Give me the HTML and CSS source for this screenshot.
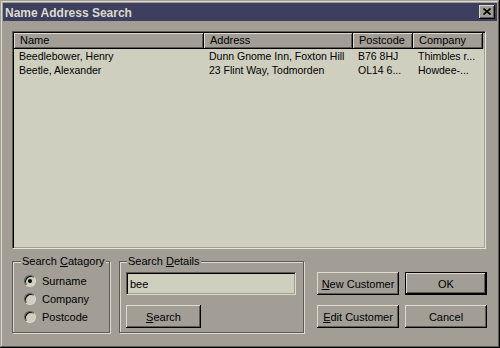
FILE: index.html
```html
<!DOCTYPE html>
<html>
<head>
<meta charset="utf-8">
<link rel="stylesheet" href="styles.css">
</head>
<body>
<div class="window">
  <div class="titlebar">
    <span class="title">Name Address Search</span>
    <div class="close"><svg width="8" height="7" viewBox="0 0 8 7"><path d="M0.5 0.5 L7.5 6.5 M7.5 0.5 L0.5 6.5" stroke="#000" stroke-width="1.6" fill="none"/></svg></div>
  </div>
  <div class="content">
    <div class="list">
      <div class="header">
        <div class="hcell c1">Name</div>
        <div class="hcell c2">Address</div>
        <div class="hcell c3">Postcode</div>
        <div class="hcell c4">Company</div>
      </div>
      <div class="row">
        <div class="cell c1">Beedlebower, Henry</div>
        <div class="cell c2">Dunn Gnome Inn, Foxton Hill</div>
        <div class="cell c3">B76 8HJ</div>
        <div class="cell c4">Thimbles r...</div>
      </div>
      <div class="row">
        <div class="cell c1">Beetle, Alexander</div>
        <div class="cell c2">23 Flint Way, Todmorden</div>
        <div class="cell c3">OL14 6...</div>
        <div class="cell c4">Howdee-...</div>
      </div>
    </div>
    <div class="bottom">
      <fieldset class="group cat">
        <legend>Search <u>C</u>atagory</legend>
        <div class="radio-row"><span class="radio checked"></span><span>Surname</span></div>
        <div class="radio-row"><span class="radio"></span><span>Company</span></div>
        <div class="radio-row"><span class="radio"></span><span>Postcode</span></div>
      </fieldset>
      <fieldset class="group det">
        <legend>Search <u>D</u>etails</legend>
        <div class="input">bee</div>
        <div class="btn search"><u>S</u>earch</div>
      </fieldset>
      <div class="buttons">
        <div class="btn"><u>N</u>ew Customer</div>
        <div class="btn default"><span class="inner">OK</span></div>
        <div class="btn"><u>E</u>dit Customer</div>
        <div class="btn">Cancel</div>
      </div>
    </div>
  </div>
</div>
</body>
</html>
```
FILE: styles.css
```css
html, body {
  margin: 0;
  padding: 0;
  background: #a29e96;
}
.window {
  width: 500px;
  height: 348px;
  box-sizing: border-box;
  padding: 3px;
  background: #a29e96;
  font-family: "Liberation Sans", Arial, sans-serif;
  font-size: 10.5px;
  color: #000;
  box-shadow: inset -1px -1px #000, inset 1px 1px #a29e96, inset -2px -2px #5f5b54, inset 2px 2px #dcdccc;
}
.titlebar {
  height: 18px;
  background: #3e3e5e;
  display: flex;
  align-items: center;
  justify-content: space-between;
  padding: 0 2px 0 2px;
}
.title {
  color: #dcdccc;
  font-weight: bold;
  font-size: 12px;
  padding-top: 1px;
}
.close {
  width: 16px;
  height: 14px;
  box-sizing: border-box;
  background: #a29e96;
  display: flex;
  align-items: center;
  justify-content: center;
  box-shadow: inset -1px -1px #000, inset 1px 1px #dcdccc, inset -2px -2px #5f5b54;
}
.close svg { display: block; margin-top: -1px; }
.content {
  padding: 10px 11px 0 9px;
}
.list {
  height: 218px;
  box-sizing: border-box;
  background: #cfcfbf;
  border: 1px solid;
  border-color: #5f5b54 #e6e6d6 #e6e6d6 #5f5b54;
  box-shadow: inset 1px 1px #000, inset -1px -1px #a29e96;
  padding: 1px;
}
.header {
  display: flex;
  height: 16px;
  background: #a29e96;
}
.hcell {
  box-sizing: border-box;
  height: 16px;
  line-height: 15px;
  padding-left: 6px;
  border-right: 1px solid #000;
  border-bottom: 1px solid #000;
  box-shadow: inset 1px 1px #dcdccc, inset -1px -1px #5f5b54;
  white-space: nowrap;
  overflow: hidden;
  font-size: 11px;
}
.c1 { width: 190px; }
.c2 { width: 149px; }
.c3 { width: 60px; }
.c4 { width: 70px; }
.row {
  display: flex;
  height: 14px;
  line-height: 14px;
}
.cell {
  box-sizing: border-box;
  padding-left: 5px;
  white-space: nowrap;
  overflow: hidden;
}
.bottom {
  display: flex;
  margin-top: 6px;
  align-items: flex-start;
}
.group {
  margin: 0;
  min-width: 0;
  box-sizing: border-box;
  height: 78px;
  border: 1px solid #5f5b54;
  box-shadow: inset 1px 1px #dcdccc, 1px 1px #dcdccc;
  padding: 4px 6px 0 11px;
}
.group legend {
  padding: 0 1px;
  margin-left: -3px;
  line-height: 13px;
  white-space: nowrap;
  background: #a29e96;
  font-size: 11px;
}
.cat {
  width: 98px;
  flex: none;
}
.det {
  width: 185px;
  flex: none;
  margin-left: 9px;
  padding-left: 6px;
}
.det legend { margin-left: 1px; }
.radio-row {
  display: flex;
  align-items: center;
  height: 18px;
  font-size: 11px;
}
.radio {
  width: 12px;
  height: 12px;
  flex: none;
  box-sizing: border-box;
  border-radius: 50%;
  background: #cfcfbf;
  border: 1px solid;
  border-color: #5f5b54 #dcdccc #dcdccc #5f5b54;
  box-shadow: inset 1px 1px #000;
  margin-right: 6px;
  position: relative;
}
.radio.checked::after {
  content: "";
  position: absolute;
  left: 3px;
  top: 3px;
  width: 4px;
  height: 4px;
  border-radius: 50%;
  background: #000;
}
.input {
  width: 170px;
  height: 23px;
  box-sizing: border-box;
  background: #cfcfbf;
  border: 1px solid;
  border-color: #5f5b54 #dcdccc #dcdccc #5f5b54;
  box-shadow: inset 1px 1px #000, inset -1px -1px #a29e96;
  padding: 2px 0 0 3px;
  line-height: 18px;
  font-size: 11px;
}
.btn {
  box-sizing: border-box;
  height: 23px;
  display: flex;
  align-items: center;
  justify-content: center;
  background: #a29e96;
  font-size: 11px;
  box-shadow: inset -1px -1px #000, inset 1px 1px #dcdccc, inset -2px -2px #5f5b54;
}
.search {
  width: 75px;
  margin-top: 10px;
}
.buttons {
  display: grid;
  grid-template-columns: 82px 82px;
  grid-auto-rows: 23px;
  column-gap: 6px;
  row-gap: 10px;
  margin-left: 13px;
  margin-top: 17px;
}
.btn.default {
  border: 1px solid #000;
  box-shadow: none;
  padding: 0;
}
.btn.default .inner {
  width: 100%;
  height: 100%;
  display: flex;
  align-items: center;
  justify-content: center;
  box-shadow: inset -1px -1px #000, inset 1px 1px #dcdccc, inset -2px -2px #5f5b54;
}
u { text-decoration: underline; text-underline-offset: 1px; }
```
